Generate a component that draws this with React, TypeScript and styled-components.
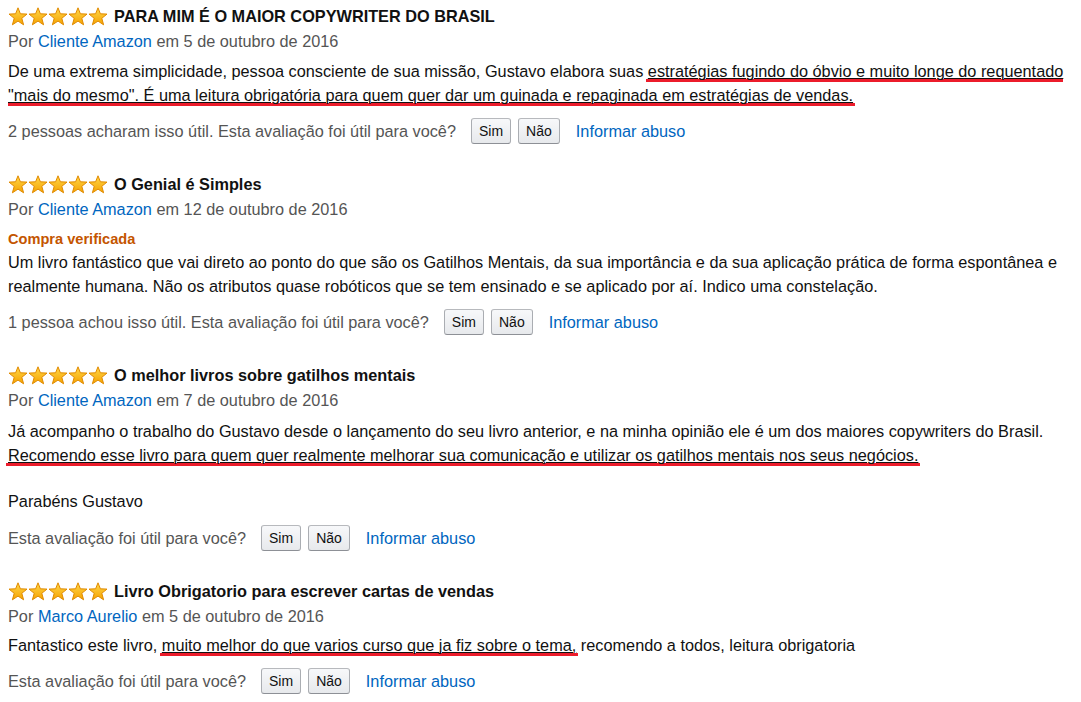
import React from 'react';
import styled, { createGlobalStyle } from 'styled-components';

const GlobalStyle = createGlobalStyle`
  html, body {
    margin: 0;
    padding: 0;
    background: #fff;
    overflow: hidden;
  }
  body {
    font-family: "Liberation Sans", Arial, sans-serif;
    color: #111;
  }
`;

const Page = styled.div`
  padding: 4px 0 0 8px;
  box-sizing: border-box;
  width: 1081px;
`;

const Review = styled.section`
  margin-bottom: 28px;
`;

const TitleRow = styled.div`
  display: flex;
  align-items: center;
  gap: 7px;
  height: 25px;
`;

const Title = styled.span`
  font-size: 16.3px;
  font-weight: bold;
  color: #111;
`;

const Byline = styled.div`
  font-size: 16.3px;
  line-height: 25px;
  color: #555;
`;

const Link = styled.a`
  color: #0066c0;
  text-decoration: none;
`;

const Verified = styled.div`
  font-size: 14.6px;
  font-weight: bold;
  line-height: 18px;
  color: #c45500;
  margin-top: 8px;
`;

const Body = styled.p<{ $top?: number }>`
  margin: ${({ $top }) => $top ?? 5}px 0 0;
  font-size: 16.3px;
  line-height: 24px;
  color: #111;
`;

// black underline from the page plus the red marker stroke drawn under it
const Marked = styled.span`
  text-decoration: underline;
  text-decoration-thickness: 1px;
  text-underline-offset: 1px;
  padding: 0 2px 2px;
  margin: 0 -2px;
  background: linear-gradient(#ec1c2b, #ec1c2b) left bottom / 100% 3px no-repeat;
`;

const Helpful = styled.div<{ $top?: number }>`
  display: flex;
  align-items: center;
  height: 26px;
  margin-top: ${({ $top }) => $top ?? 11}px;
  font-size: 16.3px;
  color: #555;
`;

const Buttons = styled.div`
  display: flex;
  gap: 7px;
  margin: 0 16px 0 15px;
`;

const VoteButton = styled.button`
  height: 26px;
  padding: 0 7px;
  font-family: "Liberation Sans", Arial, sans-serif;
  font-size: 14px;
  color: #111;
  background: linear-gradient(#f7f8fa, #e7e9ec);
  border: 1px solid #adb1b8;
  border-color: #b7b9bd #aaadb2 #8d9096;
  border-radius: 3px;
  cursor: pointer;
`;

const AbuseLink = styled.a`
  color: #0066c0;
  font-size: 16.3px;
  text-decoration: none;
`;

const starPts =
  '10,0.8 12.4,6.8 19,7.1 13.8,11.3 15.6,17.8 10,14.1 4.4,17.8 6.2,11.3 1,7.1 7.6,6.8';

const Stars: React.FC = () => (
  <svg width="99" height="19" viewBox="0 0 99 19">
    <defs>
      <linearGradient id="sg" x1="0" y1="0" x2="0" y2="1">
        <stop offset="0" stopColor="#ffd84a" />
        <stop offset="1" stopColor="#f5a200" />
      </linearGradient>
    </defs>
    {[0, 1, 2, 3, 4].map((i) => (
      <polygon
        key={i}
        points={starPts}
        transform={`translate(${i * 20} 0)`}
        fill="url(#sg)"
        stroke="#e08a00"
        strokeWidth="1"
        strokeLinejoin="round"
      />
    ))}
  </svg>
);

const HelpfulRow: React.FC<{ count?: string; top?: number }> = ({ count, top }) => (
  <Helpful $top={top}>
    <span>{count ? `${count} ` : ''}Esta avaliação foi útil para você?</span>
    <Buttons>
      <VoteButton>Sim</VoteButton>
      <VoteButton>Não</VoteButton>
    </Buttons>
    <AbuseLink href="#">Informar abuso</AbuseLink>
  </Helpful>
);

const Head: React.FC<{ title: string; author: string; date: string }> = ({ title, author, date }) => (
  <>
    <TitleRow>
      <Stars />
      <Title>{title}</Title>
    </TitleRow>
    <Byline>
      Por <Link href="#">{author}</Link> em {date}
    </Byline>
  </>
);

export default function App() {
  return (
    <>
      <GlobalStyle />
      <Page>
        <Review>
          <Head title="PARA MIM É O MAIOR COPYWRITER DO BRASIL" author="Cliente Amazon" date="5 de outubro de 2016" />
          <Body>
            De uma extrema simplicidade, pessoa consciente de sua missão, Gustavo elabora suas{' '}
            <Marked>
              estratégias fugindo do óbvio e muito longe do requentado "mais do mesmo". É uma leitura obrigatória
              para quem quer dar um guinada e repaginada em estratégias de vendas.
            </Marked>
          </Body>
          <HelpfulRow count="2 pessoas acharam isso útil." />
        </Review>

        <Review>
          <Head title="O Genial é Simples" author="Cliente Amazon" date="12 de outubro de 2016" />
          <Verified>Compra verificada</Verified>
          <Body $top={2}>
            Um livro fantástico que vai direto ao ponto do que são os Gatilhos Mentais, da sua importância e da sua
            aplicação prática de forma espontânea e realmente humana. Não os atributos quase robóticos que se tem
            ensinado e se aplicado por aí. Indico uma constelação.
          </Body>
          <HelpfulRow count="1 pessoa achou isso útil." />
        </Review>

        <Review>
          <Head title="O melhor livros sobre gatilhos mentais" author="Cliente Amazon" date="7 de outubro de 2016" />
          <Body $top={6}>
            Já acompanho o trabalho do Gustavo desde o lançamento do seu livro anterior, e na minha opinião ele é um
            dos maiores copywriters do Brasil.{' '}
            <Marked>
              Recomendo esse livro para quem quer realmente melhorar sua comunicação e utilizar os gatilhos mentais
              nos seus negócios.
            </Marked>
          </Body>
          <Body $top={22}>Parabéns Gustavo</Body>
          <HelpfulRow top={12} />
        </Review>

        <Review>
          <Head title="Livro Obrigatorio para escrever cartas de vendas" author="Marco Aurelio" date="5 de outubro de 2016" />
          <Body $top={4}>
            Fantastico este livro, <Marked>muito melhor do que varios curso que ja fiz sobre o tema,</Marked>{' '}
            recomendo a todos, leitura obrigatoria
          </Body>
          <HelpfulRow />
        </Review>
      </Page>
    </>
  );
}
